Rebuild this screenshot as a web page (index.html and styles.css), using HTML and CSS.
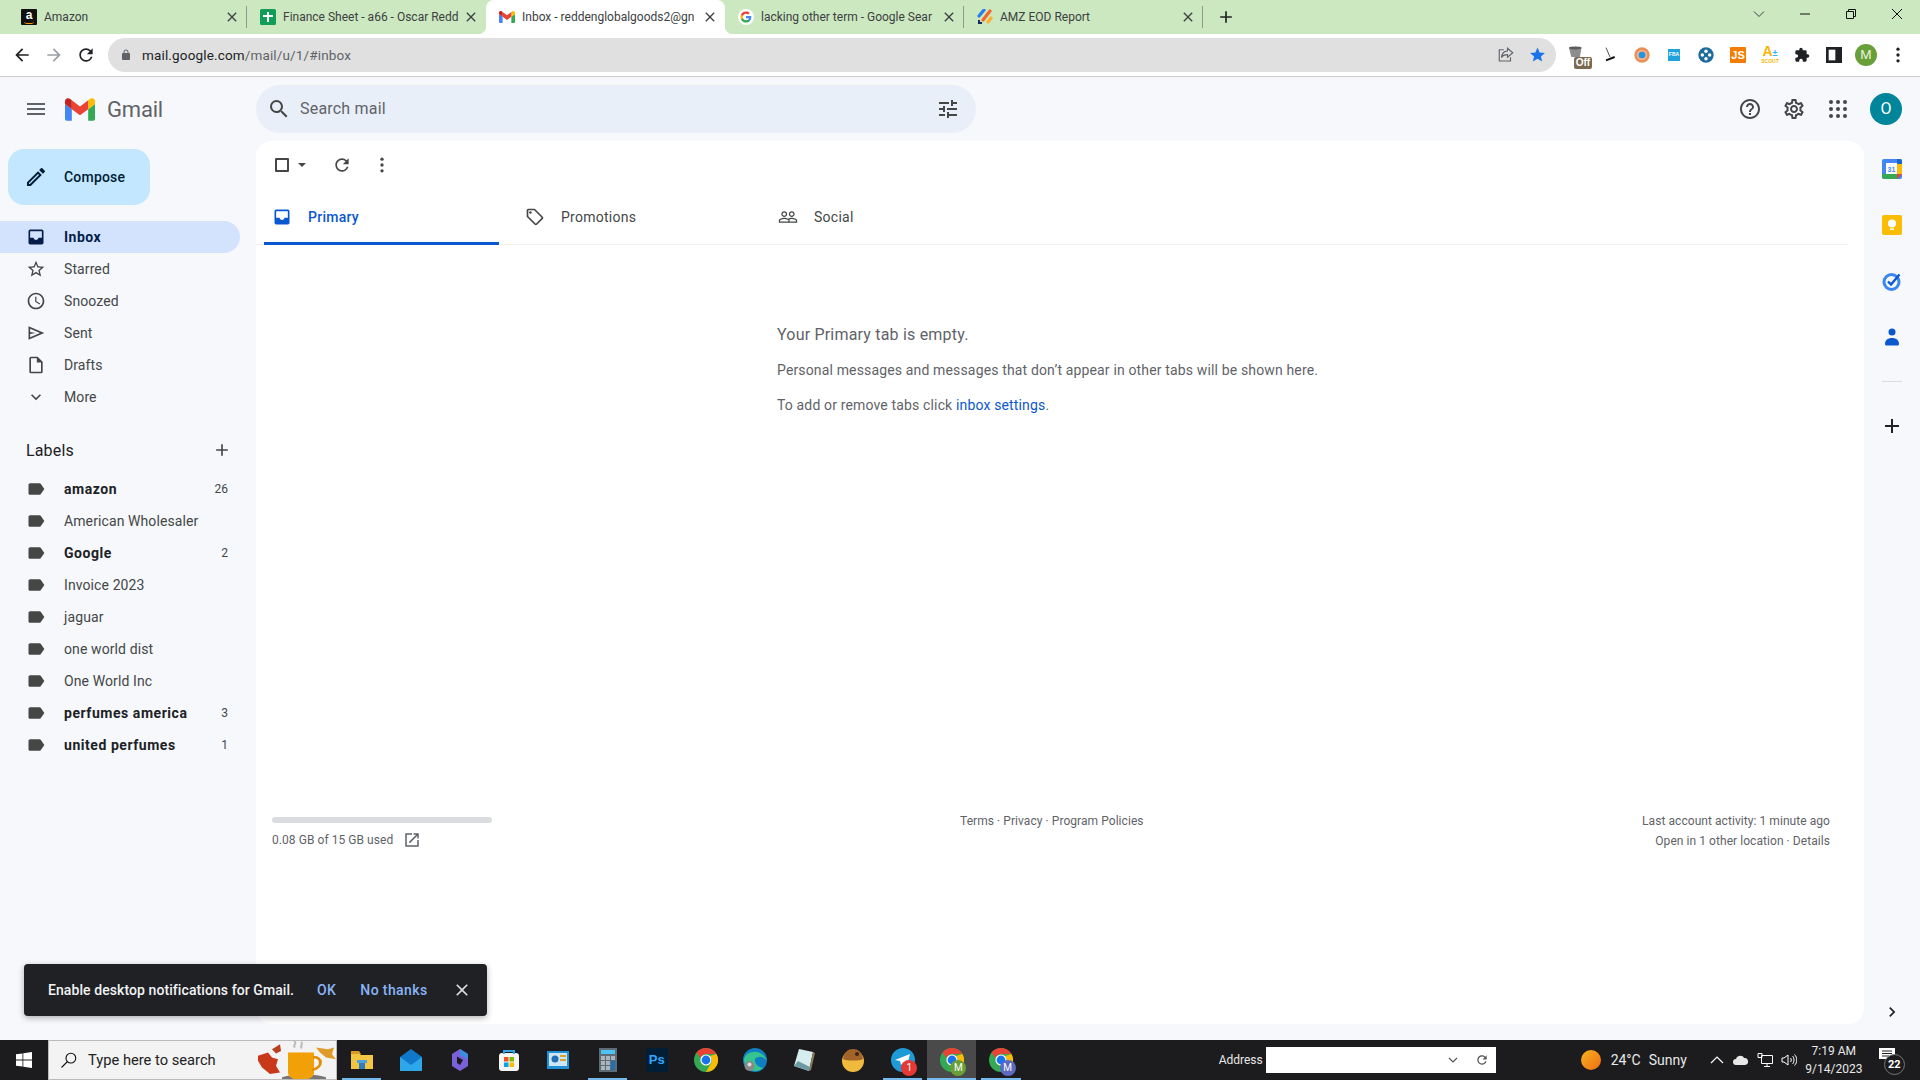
FILE: index.html
```html
<!DOCTYPE html>
<html lang="en">
<head>
    <meta charset="UTF-8">
    <meta name="viewport" content="width=device-width, initial-scale=1.0">
    <title>Inbox - Gmail</title>
    <link rel="stylesheet" href="styles.css">
</head>
<body>

<svg class="sprite" xmlns="http://www.w3.org/2000/svg">
    <symbol id="i-menu" viewBox="0 0 24 24"><path d="M3 18h18v-2H3v2zm0-5h18v-2H3v2zm0-7v2h18V6H3z"/></symbol>
    <symbol id="i-search" viewBox="0 0 24 24"><path d="M15.5 14h-.79l-.28-.27A6.471 6.471 0 0 0 16 9.5 6.5 6.5 0 1 0 9.5 16c1.61 0 3.09-.59 4.23-1.57l.27.28v.79l5 4.99L20.49 19l-4.99-5zm-6 0C7.01 14 5 11.99 5 9.5S7.01 5 9.5 5 14 7.01 14 9.5 11.99 14 9.5 14z"/></symbol>
    <symbol id="i-tune" viewBox="0 0 24 24"><path d="M3 17v2h6v-2H3zM3 5v2h10V5H3zm10 16v-2h8v-2h-8v-2h-2v6h2zM7 9v2H3v2h4v2h2V9H7zm14 4v-2H11v2h10zm-6-4h2V7h4V5h-4V3h-2v6z"/></symbol>
    <symbol id="i-help" viewBox="0 0 24 24"><path d="M11 18h2v-2h-2v2zm1-16C6.48 2 2 6.48 2 12s4.48 10 10 10 10-4.48 10-10S17.52 2 12 2zm0 18c-4.41 0-8-3.59-8-8s3.59-8 8-8 8 3.59 8 8-3.59 8-8 8zm0-14c-2.21 0-4 1.79-4 4h2c0-1.1.9-2 2-2s2 .9 2 2c0 2-3 1.75-3 5h2c0-2.25 3-2.5 3-5 0-2.21-1.79-4-4-4z"/></symbol>
    <symbol id="i-gear" viewBox="0 0 24 24"><path d="M19.43 12.98c.04-.32.07-.64.07-.98 0-.34-.03-.66-.07-.98l2.11-1.65c.19-.15.24-.42.12-.64l-2-3.46c-.09-.16-.26-.25-.44-.25-.06 0-.12.01-.17.03l-2.49 1c-.52-.4-1.08-.73-1.69-.98l-.38-2.65C14.46 2.18 14.25 2 14 2h-4c-.25 0-.46.18-.49.42l-.38 2.65c-.61.25-1.17.59-1.69.98l-2.49-1c-.06-.02-.12-.03-.18-.03-.17 0-.34.09-.43.25l-2 3.46c-.13.22-.07.49.12.64l2.11 1.65c-.04.32-.07.65-.07.98 0 .33.03.66.07.98l-2.11 1.65c-.19.15-.24.42-.12.64l2 3.46c.09.16.26.25.44.25.06 0 .12-.01.17-.03l2.49-1c.52.4 1.08.73 1.69.98l.38 2.65c.03.24.24.42.49.42h4c.25 0 .46-.18.49-.42l.38-2.65c.61-.25 1.17-.59 1.69-.98l2.49 1c.06.02.12.03.18.03.17 0 .34-.09.43-.25l2-3.46c.12-.22.07-.49-.12-.64l-2.11-1.65zm-1.98-1.71c.04.31.05.52.05.73 0 .21-.02.43-.05.73l-.14 1.13.89.7 1.08.84-.7 1.21-1.27-.51-1.04-.42-.9.68c-.43.32-.84.56-1.25.73l-1.06.43-.16 1.13-.2 1.35h-1.4l-.19-1.35-.16-1.13-1.06-.43c-.43-.18-.83-.41-1.23-.71l-.91-.7-1.06.43-1.27.51-.7-1.21 1.08-.84.89-.7-.14-1.13c-.03-.31-.05-.54-.05-.74s.02-.43.05-.73l.14-1.13-.89-.7-1.08-.84.7-1.21 1.27.51 1.04.42.9-.68c.43-.32.84-.56 1.25-.73l1.06-.43.16-1.13.2-1.35h1.39l.19 1.35.16 1.13 1.06.43c.43.18.83.41 1.23.71l.91.7 1.06-.43 1.27-.51.7 1.21-1.07.85-.89.7.14 1.13zM12 8c-2.21 0-4 1.79-4 4s1.79 4 4 4 4-1.79 4-4-1.79-4-4-4zm0 6c-1.1 0-2-.9-2-2s.9-2 2-2 2 .9 2 2-.9 2-2 2z"/></symbol>
    <symbol id="i-apps" viewBox="0 0 24 24"><circle cx="5" cy="5" r="2"/><circle cx="12" cy="5" r="2"/><circle cx="19" cy="5" r="2"/><circle cx="5" cy="12" r="2"/><circle cx="12" cy="12" r="2"/><circle cx="19" cy="12" r="2"/><circle cx="5" cy="19" r="2"/><circle cx="12" cy="19" r="2"/><circle cx="19" cy="19" r="2"/></symbol>
    <symbol id="i-pencil" viewBox="0 0 24 24"><path d="M3 17.25V21h3.75L17.81 9.94l-3.75-3.75L3 17.25zM5.92 19H5v-.92l9.06-9.06.92.92L5.92 19zM20.71 5.63l-2.34-2.34a1 1 0 0 0-1.41 0l-1.83 1.83 3.75 3.75 1.83-1.83a1 1 0 0 0 0-1.41z"/></symbol>
    <symbol id="i-inbox" viewBox="0 0 24 24"><path d="M19 3H5a2 2 0 0 0-2 2v14a2 2 0 0 0 2 2h14a2 2 0 0 0 2-2V5a2 2 0 0 0-2-2zm0 10h-4.2c0 1.5-1.25 2.7-2.8 2.7S9.2 14.5 9.2 13H5V5h14v8z"/></symbol>
    <symbol id="i-star" viewBox="0 0 24 24"><path d="M22 9.24l-7.19-.62L12 2 9.19 8.63 2 9.24l5.46 4.73L5.82 21 12 17.27 18.18 21l-1.63-7.03L22 9.24zM12 15.4l-3.76 2.27 1-4.28-3.32-2.88 4.38-.38L12 6.1l1.71 4.04 4.38.38-3.32 2.88 1 4.28L12 15.4z"/></symbol>
    <symbol id="i-clock" viewBox="0 0 24 24"><path d="M11.99 2C6.47 2 2 6.48 2 12s4.47 10 9.99 10C17.52 22 22 17.52 22 12S17.52 2 11.99 2zM12 20c-4.42 0-8-3.58-8-8s3.58-8 8-8 8 3.58 8 8-3.58 8-8 8zm.5-13H11v6l5.25 3.15.75-1.23-4.5-2.67z"/></symbol>
    <symbol id="i-send" viewBox="0 0 24 24"><path d="M3 4v16l19-8L3 4zm2 3l11.8 5L5 17v-3.8l6.5-1.2L5 10.8V7z"/></symbol>
    <symbol id="i-draft" viewBox="0 0 24 24"><path d="M14 2H6a2 2 0 0 0-2 2v16a2 2 0 0 0 2 2h12a2 2 0 0 0 2-2V8l-6-6zm4 18H6V4h7v5h5v11z"/></symbol>
    <symbol id="i-chevron" viewBox="0 0 24 24"><path d="M16.59 8.59L12 13.17 7.41 8.59 6 10l6 6 6-6z"/></symbol>
    <symbol id="i-label" viewBox="0 0 24 24"><path d="M17.63 5.84C17.27 5.33 16.67 5 16 5L5 5.01C3.9 5.01 3 5.9 3 7v10c0 1.1.9 1.99 2 1.99L16 19c.67 0 1.27-.33 1.63-.84L22 12l-4.37-6.16z"/></symbol>
    <symbol id="i-add" viewBox="0 0 24 24"><path d="M19 13h-6v6h-2v-6H5v-2h6V5h2v6h6v2z"/></symbol>
    <symbol id="i-refresh" viewBox="0 0 24 24"><path d="M17.65 6.35A7.958 7.958 0 0 0 12 4c-4.42 0-7.99 3.58-7.99 8s3.57 8 7.99 8c3.73 0 6.84-2.55 7.73-6h-2.08A5.99 5.99 0 0 1 12 18c-3.31 0-6-2.69-6-6s2.69-6 6-6c1.66 0 3.14.69 4.22 1.78L13 11h7V4l-2.35 2.35z"/></symbol>
    <symbol id="i-dots" viewBox="0 0 24 24"><circle cx="12" cy="5" r="2"/><circle cx="12" cy="12" r="2"/><circle cx="12" cy="19" r="2"/></symbol>
    <symbol id="i-tag" viewBox="0 0 24 24"><path d="M21.41 11.58l-9-9C12.05 2.22 11.55 2 11 2H4c-1.1 0-2 .9-2 2v7c0 .55.22 1.05.59 1.42l9 9c.36.36.86.58 1.41.58s1.05-.22 1.41-.59l7-7c.37-.36.59-.86.59-1.41s-.23-1.06-.59-1.42zM13 20.01L4 11V4h7v-.01l9 9-7 7.02z"/><circle cx="6.5" cy="6.5" r="1.5"/></symbol>
    <symbol id="i-people" viewBox="0 0 24 24"><path d="M16.5 13c-1.2 0-3.07.34-4.5 1-1.43-.67-3.3-1-4.5-1C5.33 13 1 14.08 1 16.25V19h22v-2.75c0-2.17-4.33-3.25-6.5-3.25zm-4 4.5h-10v-1.25c0-.54 2.56-1.75 5-1.75s5 1.21 5 1.75v1.25zm9 0H14v-1.25c0-.46-.2-.86-.52-1.22.88-.3 1.96-.53 3.02-.53 2.44 0 5 1.21 5 1.75v1.25zM7.5 12c1.93 0 3.5-1.57 3.5-3.5S9.43 5 7.5 5 4 6.57 4 8.5 5.57 12 7.5 12zm0-5.5c1.1 0 2 .9 2 2s-.9 2-2 2-2-.9-2-2 .9-2 2-2zm9 5.5c1.93 0 3.5-1.57 3.5-3.5S18.43 5 16.5 5 13 6.57 13 8.5s1.57 3.5 3.5 3.5zm0-5.5c1.1 0 2 .9 2 2s-.9 2-2 2-2-.9-2-2 .9-2 2-2z"/></symbol>
    <symbol id="i-open" viewBox="0 0 24 24"><path d="M19 19H5V5h7V3H3v18h18v-9h-2v7zM14 3v2h3.59l-9.83 9.83 1.41 1.41L19 6.41V10h2V3h-7z"/></symbol>
    <symbol id="i-close" viewBox="0 0 24 24"><path d="M19 6.41L17.59 5 12 10.59 6.41 5 5 6.41 10.59 12 5 17.59 6.41 19 12 13.41 17.59 19 19 17.59 13.41 12z"/></symbol>
    <symbol id="i-gmail" viewBox="52 42 88 66">
        <path fill="#4285f4" d="M58 108h14V74L52 59v43c0 3.32 2.69 6 6 6"/>
        <path fill="#34a853" d="M120 108h14c3.32 0 6-2.69 6-6V59l-20 15"/>
        <path fill="#fbbc04" d="M120 48v26l20-15v-8c0-7.42-8.47-11.65-14.4-7.2"/>
        <path fill="#ea4335" d="M72 74V48l24 18 24-18v26L96 92"/>
        <path fill="#c5221f" d="M52 51v8l20 15V48l-5.6-4.2c-5.94-4.45-14.4-.22-14.4 7.2"/>
    </symbol>
    <symbol id="i-chrome" viewBox="0 0 24 24">
        <circle cx="12" cy="12" r="12" fill="#34a853"/>
        <path fill="#ea4335" d="M12 0a12 12 0 0 1 10.4 6H12a6 6 0 0 0-5.6 3.8L2.5 4.600A12 12 0 0 1 12 0z"/>
        <path fill="#fbbc04" d="M22.4 6A12 12 0 0 1 12 24l5.200-9A6 6 0 0 0 16 8z"/>
        <circle cx="12" cy="12" r="5.6" fill="#fff"/>
        <circle cx="12" cy="12" r="4.4" fill="#1a73e8"/>
    </symbol>
</svg>

<div class="tabstrip">
    <div class="tab tab-sep">
        <span class="favicon fav-amazon">a</span>
        <span class="tab-title">Amazon</span>
        <svg class="tab-close"><use href="#i-close"/></svg>
    </div>
    <div class="tab">
        <svg class="favicon" viewBox="0 0 16 16"><rect width="16" height="16" rx="1.5" fill="#0f9d58"/><path d="M7 3h2v3h4v2H9v5H7V8H3V6h4z" fill="#fff"/></svg>
        <span class="tab-title">Finance Sheet - a66 - Oscar Redd</span>
        <svg class="tab-close"><use href="#i-close"/></svg>
    </div>
    <div class="tab tab-active">
        <svg class="favicon"><use href="#i-gmail"/></svg>
        <span class="tab-title">Inbox - reddenglobalgoods2@gn</span>
        <svg class="tab-close"><use href="#i-close"/></svg>
    </div>
    <div class="tab tab-sep">
        <svg class="favicon" viewBox="0 0 16 16">
            <circle cx="8" cy="8" r="8" fill="#fff"/>
            <path fill="#4285f4" d="M13.3 8.1c0-.4 0-.8-.1-1.100H8v2.200h3c-.1.7-.5 1.300-1.100 1.700v1.400h1.800c1-1 1.600-2.400 1.600-4.200z"/>
            <path fill="#34a853" d="M8 13.5c1.500 0 2.700-.5 3.700-1.300l-1.800-1.400c-.5.300-1.100.5-1.900.5-1.400 0-2.700-1-3.100-2.300H3v1.400c.9 1.900 2.800 3.100 5 3.100z"/>
            <path fill="#fbbc04" d="M4.900 9c-.2-.7-.2-1.300 0-2V5.600H3a5.500 5.500 0 0 0 0 4.800z"/>
            <path fill="#ea4335" d="M8 4.700c.8 0 1.500.3 2.100.8l1.600-1.600C10.700 3 9.500 2.500 8 2.500c-2.200 0-4.100 1.200-5 3.100L4.900 7C5.300 5.700 6.600 4.700 8 4.700z"/>
        </svg>
        <span class="tab-title">lacking other term - Google Sear</span>
        <svg class="tab-close"><use href="#i-close"/></svg>
    </div>
    <div class="tab tab-sep">
        <svg class="favicon" viewBox="0 0 16 16">
            <path d="M2 7l5-6" stroke="#2b7de9" stroke-width="3.2" stroke-linecap="round"/>
            <path d="M6 11l7-9" stroke="#f4662a" stroke-width="3.2" stroke-linecap="round"/>
            <path d="M11 13l3-4" stroke="#fbb234" stroke-width="3.2" stroke-linecap="round"/>
            <path d="M1 11h2v2h2v2H1z" fill="#1b2a5b"/>
        </svg>
        <span class="tab-title">AMZ EOD Report</span>
        <svg class="tab-close"><use href="#i-close"/></svg>
    </div>
    <svg class="new-tab"><use href="#i-add"/></svg>
    <div class="window-controls">
        <svg class="win-btn" viewBox="0 0 12 12"><path d="M1 3.5l5 5 5-5" fill="none" stroke="#3c4043" stroke-width="1"/></svg>
        <svg class="win-btn" viewBox="0 0 12 12"><path d="M1 6h10" stroke="#111" stroke-width="1"/></svg>
        <svg class="win-btn" viewBox="0 0 12 12"><path d="M1.5 3.5h7v7h-7zM3.5 3.5v-2h7v7h-2" fill="none" stroke="#111" stroke-width="1"/></svg>
        <svg class="win-btn" viewBox="0 0 12 12"><path d="M1 1l10 10M11 1L1 11" stroke="#111" stroke-width="1"/></svg>
    </div>
</div>

<div class="toolbar">
    <svg class="nav-btn" viewBox="0 0 24 24"><path d="M20 11H7.83l5.59-5.59L12 4l-8 8 8 8 1.41-1.41L7.83 13H20v-2z"/></svg>
    <svg class="nav-btn nav-off" viewBox="0 0 24 24"><path d="M12 4l-1.41 1.41L16.17 11H4v2h12.17l-5.58 5.59L12 20l8-8z"/></svg>
    <svg class="nav-btn"><use href="#i-refresh"/></svg>
    <div class="omnibox">
        <svg class="lock" viewBox="0 0 24 24"><path d="M18 8h-1V6c0-2.76-2.24-5-5-5S7 3.24 7 6v2H6c-1.1 0-2 .9-2 2v10c0 1.1.9 2 2 2h12c1.1 0 2-.9 2-2V10c0-1.1-.9-2-2-2zM9 6c0-1.66 1.34-3 3-3s3 1.34 3 3v2H9V6z"/></svg>
        <span class="url"><span class="url-host">mail.google.com</span>/mail/u/1/#inbox</span>
        <svg class="omni-share" viewBox="0 0 24 24" fill="none" stroke="#5f6368" stroke-width="1.5"><path d="M9 5H3v15h15v-5"/><path d="M14 3l7 6-7 6v-3.5c-4 0-6.500 1-8 4 .5-5 3-8.500 8-9z"/></svg>
        <svg class="omni-star" viewBox="0 0 24 24"><path d="M12 2l3 7.200 7.500.6-5.700 4.900 1.800 7.300-6.600-4-6.600 4 1.800-7.300-5.700-4.900 7.500-.6z"/></svg>
    </div>
    <div class="extensions">
        <div class="ext ext-off">
            <svg viewBox="0 0 20 14"><path d="M1 2h16l-2 12H4z" fill="#8d8d8d"/><ellipse cx="9" cy="2.5" rx="8" ry="2" fill="#5c5c5c"/></svg>
            <span class="off-badge">Off</span>
        </div>
        <div class="ext"><svg viewBox="0 0 24 24"><path d="M6 1l6 14" stroke="#444" stroke-width="1.4"/><path d="M6 20l13-5" stroke="#111" stroke-width="3"/></svg></div>
        <div class="ext"><svg viewBox="0 0 24 24"><circle cx="12" cy="12" r="11.500" fill="#e88f5a"/><circle cx="12" cy="12" r="8" fill="#f4b183"/><circle cx="12" cy="12" r="5" fill="#1e96e8"/></svg></div>
        <div class="ext"><span class="ext-fba">FBA</span></div>
        <div class="ext"><svg viewBox="0 0 24 24"><circle cx="12" cy="12" r="11.500" fill="#1e6a9e"/><circle cx="12" cy="6.500" r="2.600" fill="#fff"/><circle cx="12" cy="17.500" r="2.600" fill="#fff"/><circle cx="6.500" cy="12" r="2.600" fill="#fff"/><circle cx="17.500" cy="12" r="2.600" fill="#fff"/></svg></div>
        <div class="ext"><span class="ext-js">JS</span></div>
        <div class="ext ext-ascout"><span class="ascout-a">A<small>±</small></span><span class="ascout-s">SCOUT</span></div>
        <div class="ext"><svg viewBox="0 0 24 24" fill="#202124"><path d="M20.5 11H19V7a2 2 0 0 0-2-2h-4V3.500a2.500 2.500 0 0 0-5 0V5H4a2 2 0 0 0-2 2v3.800h1.500a2.700 2.700 0 0 1 0 5.400H2V20a2 2 0 0 0 2 2h3.800v-1.500a2.700 2.700 0 0 1 5.400 0V22H17a2 2 0 0 0 2-2v-4h1.500a2.500 2.500 0 0 0 0-5z"/></svg></div>
        <div class="ext"><svg viewBox="0 0 24 24"><path d="M0 0h24v24H0z" fill="#202124"/><path d="M4 4h10v16H4z" fill="#fff"/></svg></div>
        <div class="ext"><span class="profile-m">M</span></div>
        <div class="ext"><svg class="chrome-menu" viewBox="0 0 24 24"><use href="#i-dots"/></svg></div>
    </div>
</div>

<div class="gmail">
    <header class="gm-header">
        <div class="brand">
            <svg class="gm-icon burger"><use href="#i-menu"/></svg>
            <svg class="gmail-logo"><use href="#i-gmail"/></svg>
            <span class="gmail-word">Gmail</span>
        </div>
        <div class="searchbox">
            <svg class="gm-icon search-icon"><use href="#i-search"/></svg>
            <span class="search-text">Search mail</span>
            <svg class="gm-icon tune-icon"><use href="#i-tune"/></svg>
        </div>
        <div class="header-right">
            <svg class="gm-icon"><use href="#i-help"/></svg>
            <svg class="gm-icon"><use href="#i-gear"/></svg>
            <svg class="gm-icon"><use href="#i-apps"/></svg>
            <span class="account">O</span>
        </div>
    </header>

    <div class="gm-body">
        <nav class="sidebar">
            <div class="compose">
                <svg class="compose-pencil"><use href="#i-pencil"/></svg>
                <span>Compose</span>
            </div>
            <ul class="nav-list">
                <li class="nav-item active"><svg><use href="#i-inbox"/></svg><span>Inbox</span></li>
                <li class="nav-item"><svg><use href="#i-star"/></svg><span>Starred</span></li>
                <li class="nav-item"><svg><use href="#i-clock"/></svg><span>Snoozed</span></li>
                <li class="nav-item"><svg><use href="#i-send"/></svg><span>Sent</span></li>
                <li class="nav-item"><svg><use href="#i-draft"/></svg><span>Drafts</span></li>
                <li class="nav-item"><svg><use href="#i-chevron"/></svg><span>More</span></li>
            </ul>
            <div class="labels-head">
                <span>Labels</span>
                <svg><use href="#i-add"/></svg>
            </div>
            <ul class="nav-list label-list">
                <li class="nav-item unread"><svg><use href="#i-label"/></svg><span>amazon</span><em>26</em></li>
                <li class="nav-item"><svg><use href="#i-label"/></svg><span>American Wholesaler</span></li>
                <li class="nav-item unread"><svg><use href="#i-label"/></svg><span>Google</span><em>2</em></li>
                <li class="nav-item"><svg><use href="#i-label"/></svg><span>Invoice 2023</span></li>
                <li class="nav-item"><svg><use href="#i-label"/></svg><span>jaguar</span></li>
                <li class="nav-item"><svg><use href="#i-label"/></svg><span>one world dist</span></li>
                <li class="nav-item"><svg><use href="#i-label"/></svg><span>One World Inc</span></li>
                <li class="nav-item unread"><svg><use href="#i-label"/></svg><span>perfumes america</span><em>3</em></li>
                <li class="nav-item unread"><svg><use href="#i-label"/></svg><span>united perfumes</span><em>1</em></li>
            </ul>
        </nav>

        <main class="panel">
            <div class="actions">
                <span class="check-box"></span>
                <span class="check-caret"></span>
                <svg class="act-icon act-refresh"><use href="#i-refresh"/></svg>
                <svg class="act-icon act-more"><use href="#i-dots"/></svg>
            </div>
            <div class="cat-tabs">
                <div class="cat-tab selected"><svg><use href="#i-inbox"/></svg><span>Primary</span></div>
                <div class="cat-tab"><svg><use href="#i-tag"/></svg><span>Promotions</span></div>
                <div class="cat-tab"><svg><use href="#i-people"/></svg><span>Social</span></div>
            </div>
            <div class="empty">
                <h2>Your Primary tab is empty.</h2>
                <p>Personal messages and messages that don’t appear in other tabs will be shown here.</p>
                <p>To add or remove tabs click <a href="#">inbox settings</a>.</p>
            </div>
            <footer class="gm-footer">
                <div class="storage">
                    <div class="storage-bar"></div>
                    <div class="storage-text">0.08 GB of 15 GB used <svg><use href="#i-open"/></svg></div>
                </div>
                <div class="policies">Terms · Privacy · Program Policies</div>
                <div class="activity">
                    <div>Last account activity: 1 minute ago</div>
                    <div>Open in 1 other location · Details</div>
                </div>
            </footer>
        </main>

        <aside class="sidepanel">
            <svg class="side-icon" viewBox="0 0 20 20">
                <rect width="20" height="20" rx="2" fill="#4285f4"/>
                <path d="M15 0h3a2 2 0 0 1 2 2v3h-5z" fill="#1967d2"/>
                <rect x="15" y="5" width="5" height="10" fill="#fbbc04"/>
                <path d="M0 15h15v5H2a2 2 0 0 1-2-2z" fill="#34a853"/>
                <path d="M15 15h5l-5 5z" fill="#ea4335"/>
                <rect x="4" y="4" width="11" height="11" fill="#fff"/>
                <text x="9.5" y="13" class="cal-num">31</text>
            </svg>
            <svg class="side-icon" viewBox="0 0 20 20">
                <rect width="20" height="20" rx="2" fill="#fbbc04"/>
                <circle cx="10" cy="8.500" r="4" fill="#fff"/>
                <rect x="8" y="13.500" width="4" height="1.500" fill="#fff"/>
            </svg>
            <svg class="side-icon" viewBox="0 0 20 20">
                <circle cx="9.500" cy="11" r="7.500" fill="none" stroke="#3b86f0" stroke-width="3"/>
                <path d="M6 10.500l3 3 8.500-10" fill="none" stroke="#0b57d0" stroke-width="2.400"/>
            </svg>
            <svg class="side-icon" viewBox="0 0 20 20">
                <circle cx="10" cy="5" r="3.500" fill="#0b57d0"/>
                <path d="M3 17c0-4 3-6 7-6s7 2 7 6c0 1-1 1.500-2 1.500H5c-1 0-2-.5-2-1.500z" fill="#0b57d0"/>
            </svg>
            <div class="side-divider"></div>
            <svg class="side-add"><use href="#i-add"/></svg>
            <svg class="side-expand" viewBox="0 0 24 24"><path d="M8.59 16.59L13.17 12 8.59 7.41 10 6l6 6-6 6z"/></svg>
        </aside>
    </div>

    <div class="notify">
        <span class="notify-text">Enable desktop notifications for Gmail.</span>
        <a href="#">OK</a>
        <a href="#">No thanks</a>
        <svg><use href="#i-close"/></svg>
    </div>
</div>

<div class="taskbar">
    <div class="start">
        <svg viewBox="0 0 16 16" fill="#fff"><path d="M0 2.300l6.500-.9v6.200H0zM7.300 1.300L16 0v7.600H7.300zM0 8.400h6.500v6.200L0 13.700zM7.300 8.400H16V16l-8.700-1.200z"/></svg>
    </div>
    <div class="task-search">
        <svg viewBox="0 0 24 24" fill="none" stroke="#111" stroke-width="1.500"><circle cx="14.500" cy="9.500" r="6.500"/><path d="M10 14l-8 8"/></svg>
        <span>Type here to search</span>
        <svg class="mug" viewBox="0 0 80 46" preserveAspectRatio="none">
            <path d="M2 18l10-4 4 6 6 2-2 8 4 8-10 2-8-8-4-8z" fill="#c8381b"/>
            <path d="M16 10l8-6 1 8-5 3z" fill="#b9401c"/>
            <path d="M60 8l12 2 6-2-2 8 4 6-10-2-6-6z" fill="#e09a2b"/>
            <path d="M38 0c4 3-2 5 1 8M45 1c3 3-2 5 1 8" fill="none" stroke="#bbb" stroke-width="2"/>
            <path d="M26 44c8-4 36-4 44 0v2H26z" fill="#777"/>
            <path d="M32 14h26v24c0 5-4 8-8 8H40c-4 0-8-3-8-8z" fill="#f2a007"/>
            <path d="M57 20c9-2 11 12-1 15" fill="none" stroke="#e08e05" stroke-width="3"/>
        </svg>
    </div>
    <div class="task-icons">
        <div class="task-item running">
            <svg viewBox="0 0 24 24"><path d="M1 5h8l2 2h12v14H1z" fill="#f4c542"/><path d="M1 3h8l2 3H1z" fill="#d99a24"/><path d="M9 14h6v7H9z" fill="#2f7bbf"/><path d="M7 12h10v3H7z" fill="#4aa3df"/></svg>
        </div>
        <div class="task-item">
            <svg viewBox="0 0 24 24"><path d="M1 9l11-8 11 8v14H1z" fill="#0f78c9"/><path d="M1 9l11 8 11-8v14H1z" fill="#2ea6ea"/></svg>
        </div>
        <div class="task-item">
            <svg viewBox="0 0 24 24"><path d="M12 1l8 5v12l-8 5-8-5V6z" fill="#7b61d9"/><path d="M12 1l8 5v5l-8-4z" fill="#3b8fe0"/><path d="M9 8.500l6 3.500-3 5-3-2z" fill="#1c1c1e"/></svg>
        </div>
        <div class="task-item">
            <svg viewBox="0 0 24 24"><rect x="2" y="5" width="20" height="18" rx="3" fill="#f5f5f5"/><path d="M7 6V3h10v3" fill="none" stroke="#2ea6ea" stroke-width="2"/><rect x="7" y="9" width="4.500" height="4.500" fill="#f25022"/><rect x="12.500" y="9" width="4.500" height="4.500" fill="#7fba00"/><rect x="7" y="14.500" width="4.500" height="4.500" fill="#00a4ef"/><rect x="12.500" y="14.500" width="4.500" height="4.500" fill="#ffb900"/></svg>
        </div>
        <div class="task-item">
            <svg viewBox="0 0 24 24"><rect x="1" y="3" width="22" height="18" fill="#1f8fd6"/><rect x="3" y="5" width="18" height="13" fill="#cde6f7"/><circle cx="9" cy="11" r="3.500" fill="#1f6fb5"/><path d="M14 7h6v2h-6zM14 11h6v2h-6z" fill="#e0a020"/></svg>
        </div>
        <div class="task-item running">
            <svg viewBox="0 0 24 24"><rect x="3" y="0" width="18" height="24" fill="#5d6b75"/><rect x="5" y="2" width="14" height="4" fill="#4fc3f7"/><path d="M5 8h4v4H5zM10 8h4v4h-4zM15 8h4v4h-4zM5 13h4v4H5zM10 13h4v4h-4zM5 18h4v4H5zM10 18h4v4h-4z" fill="#aab4bb"/><rect x="15" y="13" width="4" height="9" fill="#1f6fb5"/></svg>
        </div>
        <div class="task-item"><span class="ps-icon">Ps</span></div>
        <div class="task-item"><svg><use href="#i-chrome"/></svg></div>
        <div class="task-item">
            <svg viewBox="0 0 24 24"><circle cx="12" cy="12" r="12" fill="#0f7fc4"/><path d="M1 11C3 2 20 0 24 13c-2-4-9-6-12-2-1 3 2 8 8 9-7 7-20 1-19-9z" fill="#35c48d"/><circle cx="6.500" cy="18" r="5" fill="#888"/><circle cx="6.500" cy="16.500" r="2" fill="#ddd"/></svg>
        </div>
        <div class="task-item">
            <svg viewBox="0 0 24 24"><path d="M7 1l14 3-4 19-15-5z" fill="#d6edf0"/><path d="M2 18l15 5 1-4-12-6z" fill="#6e9aa3"/><path d="M21 4l-4 19 2-1 4-17z" fill="#8b7a55"/></svg>
        </div>
        <div class="task-item">
            <svg viewBox="0 0 24 24"><ellipse cx="12" cy="13" rx="11" ry="11" fill="#f0bb3c"/><path d="M2 11C3 4 7 1 12 1s9 3 10 10c-3 2-17 2-20 0z" fill="#a2642a"/><circle cx="16" cy="6" r="2" fill="#3b2412"/></svg>
        </div>
        <div class="task-item running">
            <svg viewBox="0 0 24 24"><circle cx="12" cy="12" r="12" fill="#1e9bd7"/><path d="M4 12l15-6-3 12-4-3-2 2-1-4z" fill="#fff"/></svg>
            <span class="task-badge">1</span>
        </div>
        <div class="task-item running current">
            <svg><use href="#i-chrome"/></svg>
            <span class="profile-badge">M</span>
        </div>
        <div class="task-item running">
            <svg><use href="#i-chrome"/></svg>
            <span class="profile-badge badge-blue">M</span>
        </div>
    </div>
    <span class="address-label">Address</span>
    <div class="address-box">
        <svg class="addr-caret" viewBox="0 0 12 12"><path d="M2 4l4 4 4-4" fill="none" stroke="#555" stroke-width="1.200"/></svg>
        <svg class="addr-go" viewBox="0 0 24 24"><use href="#i-refresh"/></svg>
    </div>
    <span class="sun"></span>
    <span class="weather">24°C</span>
    <span class="weather weather-word">Sunny</span>
    <svg class="tray tray-first" viewBox="0 0 16 16"><path d="M2 11l6-6 6 6" fill="none" stroke="#fff" stroke-width="1.200"/></svg>
    <svg class="tray" viewBox="0 0 16 16"><path d="M3 13a3 3 0 0 1 0-6c1-4 7-4 8-1a3.500 3.500 0 0 1 1 7z" fill="#e8e8e8"/></svg>
    <svg class="tray" viewBox="0 0 16 16" fill="none" stroke="#fff"><path d="M4.500 3.500h11v8h-11zM1 1.500h4v4H1zM10 11.500v3M7 14.500h6"/></svg>
    <svg class="tray" viewBox="0 0 16 16" fill="none" stroke="#fff"><path d="M1 6h2l4-3v10l-4-3H1zM9.500 6c1 1 1 3 0 4M11.500 4c2 2 2 6 0 8M13.500 2.500c3 3 3 8 0 11"/></svg>
    <div class="clock">
        <div>7:19 AM</div>
        <div>9/14/2023</div>
    </div>
    <div class="action-center">
        <svg viewBox="0 0 16 14"><path d="M0 0h16v11H0z" fill="#fff"/><path d="M3 3h10M3 5.500h10M3 8h7" stroke="#222"/></svg>
        <span class="ac-count">22</span>
    </div>
</div>

</body>
</html>
```

FILE: styles.css
```css
* {
    box-sizing: border-box;
}
html, body {
    margin: 0;
    padding: 0;
}
body {
    width: 1920px;
    height: 1080px;
    overflow: hidden;
    display: flex;
    flex-direction: column;
    font-family: Roboto, Arial, sans-serif;
    background: #f6f8fc;
    color: #444746;
}
ul {
    list-style: none;
    margin: 0;
    padding: 0;
}
a {
    text-decoration: none;
}
.sprite {
    display: none;
}

/* browser tabs */
.tabstrip {
    height: 34px;
    background: #cce8c0;
    display: flex;
    padding-left: 8px;
    flex-shrink: 0;
}
.tab {
    width: 239px;
    display: flex;
    align-items: center;
    padding: 0 7px 0 13px;
    font-size: 12px;
    color: #3c4043;
    position: relative;
}
.tab-sep::after {
    content: "";
    position: absolute;
    right: 0;
    top: 6px;
    height: 22px;
    width: 1px;
    background: #8c9c86;
}
.tab-active {
    background: #fff;
    border-radius: 8px 8px 0 0;
}
.tab-active::before,
.tab-active::after {
    content: "";
    position: absolute;
    bottom: 0;
    width: 8px;
    height: 8px;
}
.tab-active::before {
    left: -8px;
    background: radial-gradient(circle at 0 0, #cce8c0 8px, #fff 8.5px);
}
.tab-active::after {
    right: -8px;
    background: radial-gradient(circle at 100% 0, #cce8c0 8px, #fff 8.5px);
}
.favicon {
    width: 16px;
    height: 16px;
    flex-shrink: 0;
    margin-right: 7px;
}
.fav-amazon {
    background: #111;
    color: #fff;
    font: bold 12px/12px "Liberation Sans", sans-serif;
    text-align: center;
    border-radius: 1px;
    position: relative;
}
.fav-amazon::after {
    content: "";
    position: absolute;
    left: 3px;
    right: 3px;
    bottom: 1px;
    height: 3px;
    border-bottom: 1.5px solid #f90;
    border-radius: 0 0 50% 50%;
}
.tab-title {
    flex: 1;
    white-space: nowrap;
    overflow: hidden;
}
.tab-close {
    width: 16px;
    height: 16px;
    margin-left: 1px;
    fill: #3c4043;
    flex-shrink: 0;
}
.new-tab {
    width: 20px;
    height: 20px;
    margin: 7px 0 0 13px;
    fill: #202124;
}
.window-controls {
    margin-left: auto;
    display: flex;
    align-items: center;
    height: 28px;
    gap: 34px;
    padding-right: 17px;
}
.win-btn {
    width: 12px;
    height: 12px;
}

/* browser toolbar */
.toolbar {
    height: 43px;
    background: #fff;
    border-bottom: 1px solid #ccc;
    display: flex;
    align-items: center;
    padding: 0 0 1px 12px;
    flex-shrink: 0;
}
.nav-btn {
    width: 20px;
    height: 20px;
    margin-right: 12px;
    fill: #202124;
}
.nav-off {
    fill: #9aa0a6;
}
.omnibox {
    width: 1448px;
    height: 34px;
    border-radius: 17px;
    background: #e0e0e0;
    display: flex;
    align-items: center;
    padding: 0 10px 0 12px;
}
.lock {
    width: 12px;
    height: 12px;
    fill: #5f6368;
    margin-right: 10px;
}
.url {
    font-size: 13.5px;
    letter-spacing: .15px;
    color: #5f6368;
}
.url-host {
    color: #202124;
}
.omni-share {
    width: 18px;
    height: 18px;
    margin-left: auto;
    margin-right: -1px;
}
.omni-star {
    width: 17px;
    height: 17px;
    margin-left: 15px;
    fill: #1a73e8;
}
.extensions {
    display: flex;
    margin-left: 6px;
}
.ext {
    width: 32px;
    height: 32px;
    display: flex;
    align-items: center;
    justify-content: center;
    position: relative;
}
.ext svg {
    width: 16px;
    height: 16px;
}
.ext-off svg {
    width: 16px;
    height: 11px;
    margin: -7px 4px 0 0;
}
.off-badge {
    position: absolute;
    right: 2px;
    bottom: 2px;
    width: 18px;
    height: 12px;
    background: #7c6a50;
    border-radius: 2px;
    color: #fff;
    font: bold 10px/12px "Liberation Sans", sans-serif;
    text-align: center;
}
.ext-fba {
    width: 12px;
    height: 12px;
    background: #1fa3dc;
    color: #fff;
    font: bold 5px/10px "Liberation Sans", sans-serif;
    text-align: center;
}
.ext-js {
    width: 16px;
    height: 16px;
    background: #f57c00;
    color: #fff;
    font: bold 11px/16px "Liberation Sans", sans-serif;
    text-align: center;
    border-radius: 1px;
}
.ext-ascout {
    flex-direction: column;
    color: #f7b500;
    font-family: "Liberation Sans", sans-serif;
    font-weight: bold;
}
.ascout-a {
    font-size: 14px;
    line-height: 12px;
}
.ascout-a small {
    font-size: 9px;
    color: #29b6f6;
}
.ascout-s {
    font-size: 5px;
    line-height: 5px;
}
.profile-m {
    width: 22px;
    height: 22px;
    border-radius: 50%;
    background: #689f38;
    color: #e8f1dc;
    font-size: 13px;
    line-height: 22px;
    text-align: center;
}
.ext .chrome-menu {
    width: 20px;
    height: 20px;
    fill: #202124;
}

/* gmail */
.gmail {
    flex: 1;
    display: flex;
    flex-direction: column;
    position: relative;
    min-height: 0;
}
.gm-header {
    height: 64px;
    display: flex;
    align-items: center;
    flex-shrink: 0;
}
.gm-icon {
    width: 24px;
    height: 24px;
    fill: #444746;
}
.brand {
    width: 256px;
    display: flex;
    align-items: center;
    padding-left: 24px;
}
.burger {
    fill: #5f6368;
}
.gmail-logo {
    width: 30px;
    height: 23px;
    margin-left: 17px;
}
.gmail-word {
    font-size: 22px;
    color: #5f6368;
    margin-left: 12px;
    letter-spacing: -.2px;
}
.searchbox {
    width: 720px;
    height: 48px;
    border-radius: 24px;
    background: #e9eff9;
    display: flex;
    align-items: center;
    padding: 0 11px;
}
.search-text {
    margin-left: 9px;
    padding-bottom: 2px;
    font-size: 16px;
    letter-spacing: .2px;
    color: #5f6368;
}
.tune-icon {
    margin-left: auto;
    transform: translateX(-5px);
}
.header-right {
    margin-left: auto;
    display: flex;
    align-items: center;
    gap: 20px;
    padding-right: 18px;
}
.account {
    width: 32px;
    height: 32px;
    border-radius: 50%;
    background: #00859b;
    color: #fff;
    font-size: 16px;
    line-height: 32px;
    text-align: center;
}
.gm-body {
    flex: 1;
    display: flex;
    min-height: 0;
    padding-bottom: 16px;
}

/* sidebar */
.sidebar {
    width: 256px;
    flex-shrink: 0;
    padding-top: 8px;
}
.compose {
    width: 142px;
    height: 56px;
    margin-left: 8px;
    border-radius: 16px;
    background: #c2e7ff;
    display: flex;
    align-items: center;
    padding-left: 16px;
    font-size: 14px;
    font-weight: 500;
    letter-spacing: .2px;
    color: #001d35;
}
.compose-pencil {
    width: 24px;
    height: 24px;
    margin-right: 16px;
    fill: #001d35;
}
.nav-list {
    margin-top: 16px;
    width: 240px;
}
.nav-item {
    height: 32px;
    display: flex;
    align-items: center;
    padding: 0 12px 0 26px;
    font-size: 14px;
    letter-spacing: .1px;
    color: #444746;
    border-radius: 0 16px 16px 0;
}
.nav-item svg {
    width: 20px;
    height: 20px;
    margin-right: 18px;
    fill: #444746;
    flex-shrink: 0;
}
.nav-item.active {
    background: #d3e3fd;
    color: #041e49;
    font-weight: 700;
    letter-spacing: .5px;
}
.nav-item.active svg {
    fill: #041e49;
}
.nav-item.unread {
    font-weight: 700;
    letter-spacing: .55px;
    color: #202124;
}
.nav-item em {
    margin-left: auto;
    font-style: normal;
    font-size: 12px;
    font-weight: 400;
    letter-spacing: 0;
    color: #444746;
}
.labels-head {
    width: 240px;
    height: 32px;
    margin-top: 21px;
    padding: 0 8px 0 26px;
    display: flex;
    align-items: center;
    justify-content: space-between;
    font-size: 16px;
    letter-spacing: .15px;
    color: #202124;
}
.labels-head svg {
    width: 20px;
    height: 20px;
    fill: #444746;
}
.label-list {
    margin-top: 7px;
}

/* main panel */
.panel {
    flex: 1;
    background: #fff;
    border-radius: 16px;
    display: flex;
    flex-direction: column;
    min-width: 0;
}
.actions {
    height: 48px;
    display: flex;
    align-items: center;
    padding-left: 19px;
    flex-shrink: 0;
}
.check-box {
    width: 14px;
    height: 14px;
    border: 2px solid #444746;
    border-radius: 1px;
}
.check-caret {
    width: 0;
    height: 0;
    border: 4px solid transparent;
    border-top: 4px solid #444746;
    border-bottom: 0;
    margin-left: 9px;
}
.act-icon {
    width: 20px;
    height: 20px;
    fill: #444746;
}
.act-refresh {
    margin-left: 26px;
}
.act-more {
    margin-left: 20px;
}
.cat-tabs {
    height: 56px;
    margin: 0 16px 0 0;
    display: flex;
    gap: 18px;
    padding-left: 8px;
    border-bottom: 1px solid #f0f0f0;
    flex-shrink: 0;
}
.cat-tab {
    width: 235px;
    height: 56px;
    display: flex;
    align-items: center;
    padding: 0 0 0 8px;
    font-size: 14px;
    letter-spacing: .25px;
    color: #444746;
}
.cat-tab svg {
    width: 20px;
    height: 20px;
    margin-right: 16px;
    fill: #444746;
}
.cat-tab.selected {
    color: #0b57d0;
    font-weight: 500;
    border-bottom: 3px solid #0b57d0;
    padding-top: 3px;
}
.cat-tab.selected svg {
    fill: #0b57d0;
}
.empty {
    margin: 78px 0 0 521px;
    height: 492px;
    color: #5f6368;
    font-size: 14px;
    letter-spacing: .15px;
    flex-shrink: 0;
}
.empty h2 {
    margin: 0;
    font-size: 16px;
    line-height: 24px;
    font-weight: 400;
    letter-spacing: .2px;
}
.empty p {
    margin: 13px 0 0;
    line-height: 20px;
}
.empty p + p {
    margin-top: 15px;
}
.empty a {
    color: #0b57d0;
}
.gm-footer {
    display: flex;
    padding: 0 34px 0 16px;
    font-size: 12px;
    letter-spacing: .06px;
    color: #5f6368;
    line-height: 20px;
}
.storage {
    width: 220px;
    padding-top: 1px;
}
.storage-bar {
    height: 6px;
    border-radius: 3px;
    background: #dadce0;
    margin-top: 1px;
}
.storage-text {
    margin-top: 7px;
    display: flex;
    align-items: center;
    gap: 10px;
}
.storage-text svg {
    width: 18px;
    height: 18px;
    fill: #5f6368;
}
.policies {
    margin-left: 468px;
    margin-top: -4px;
}
.activity {
    margin-left: auto;
    text-align: right;
    margin-top: -4px;
}

/* right side panel */
.sidepanel {
    width: 56px;
    flex-shrink: 0;
    display: flex;
    flex-direction: column;
    align-items: center;
    padding-top: 18px;
}
.side-icon {
    width: 20px;
    height: 20px;
    margin-bottom: 36px;
    flex-shrink: 0;
}
.cal-num {
    font: bold 7px "Liberation Sans", sans-serif;
    fill: #4285f4;
    text-anchor: middle;
}
.side-divider {
    width: 20px;
    height: 1px;
    background: #dadce0;
    margin-top: -2px;
}
.side-add {
    width: 24px;
    height: 24px;
    margin-top: 32px;
    fill: #202124;
}
.side-expand {
    width: 20px;
    height: 20px;
    margin-top: auto;
    margin-bottom: 2px;
    fill: #202124;
}

/* notification toast */
.notify {
    position: absolute;
    left: 24px;
    top: 887px;
    width: 463px;
    height: 52px;
    background: #202124;
    border-radius: 4px;
    box-shadow: 0 2px 6px rgba(0, 0, 0, .3);
    display: flex;
    align-items: center;
    padding-left: 24px;
    font-size: 14px;
    font-weight: 500;
    color: #f1f3f4;
}
.notify a {
    color: #8ab4f8;
    margin-left: 24px;
    letter-spacing: .4px;
}
.notify-text {
    width: 245px;
    letter-spacing: .08px;
    white-space: nowrap;
}
.notify svg {
    width: 20px;
    height: 20px;
    margin-left: 24px;
    fill: #dadce0;
}

/* windows taskbar */
.taskbar {
    height: 40px;
    background: #1c1c1e;
    display: flex;
    align-items: center;
    flex-shrink: 0;
    color: #fff;
    font-size: 13px;
}
.start {
    width: 48px;
    display: flex;
    justify-content: center;
}
.start svg {
    width: 16px;
    height: 16px;
}
.task-search {
    width: 289px;
    height: 40px;
    background: #f3f3f3;
    border: 1px solid #bbb;
    display: flex;
    align-items: center;
    padding-left: 11px;
    color: #222;
    font-size: 14.7px;
}
.task-search > svg:first-child {
    width: 18px;
    height: 18px;
    margin-right: 10px;
}
.mug {
    width: 80px;
    height: 38px;
    margin-left: auto;
}
.task-icons {
    display: flex;
}
.task-item {
    width: 49.2px;
    height: 40px;
    display: flex;
    align-items: center;
    justify-content: center;
    position: relative;
}
.task-item > svg {
    width: 24px;
    height: 24px;
}
.task-item.running::after {
    content: "";
    position: absolute;
    bottom: 0;
    left: 5px;
    right: 5px;
    height: 2px;
    background: #76b9ed;
}
.task-item.current {
    background: #4a4a4a;
}
.task-item.current::after {
    left: 0;
    right: 0;
}
.ps-icon {
    width: 22px;
    height: 24px;
    border-radius: 3px;
    background: #001e36;
    color: #31a8ff;
    font: bold 13px/24px "Liberation Sans", sans-serif;
    text-align: center;
}
.task-badge,
.profile-badge {
    position: absolute;
    right: 10px;
    bottom: 4px;
    width: 16px;
    height: 16px;
    border-radius: 50%;
    background: #e53935;
    color: #fff;
    font-size: 10px;
    line-height: 16px;
    text-align: center;
}
.profile-badge {
    background: #689f38;
}
.badge-blue {
    background: #5c6bc0;
}
.address-label {
    margin-left: 193px;
    width: 41px;
    font-size: 12px;
    color: #e8e8e8;
}
.address-box {
    width: 230px;
    height: 26px;
    margin-left: 6px;
    background: #fff;
    display: flex;
    align-items: center;
    justify-content: flex-end;
}
.addr-caret {
    width: 12px;
    height: 12px;
    margin-right: 12px;
}
.addr-go {
    width: 14px;
    height: 14px;
    margin: 0 7px 0 4px;
    fill: #555;
}
.sun {
    width: 20px;
    height: 20px;
    border-radius: 50%;
    margin-left: 85px;
    background: linear-gradient(135deg, #f7b420, #ee6c12);
}
.weather {
    margin-left: 10px;
    font-size: 14px;
    color: #e8e8e8;
}
.weather-word {
    margin-left: 8px;
}
.tray {
    width: 16px;
    height: 16px;
    margin-left: 8px;
    flex-shrink: 0;
}
.tray-first {
    margin-left: 22px;
}
.clock {
    width: 64px;
    margin-left: 5px;
    text-align: center;
    font-size: 12px;
    line-height: 18px;
    color: #e8e8e8;
}
.action-center {
    width: 24px;
    height: 28px;
    margin-left: 13px;
    position: relative;
}
.action-center svg {
    width: 16px;
    height: 14px;
    position: absolute;
    left: 0;
    top: 2px;
}
.ac-count {
    position: absolute;
    left: 5px;
    top: 8px;
    width: 21px;
    height: 21px;
    border-radius: 50%;
    border: 1px solid #777;
    background: #1c1c1e;
    font-size: 11px;
    font-weight: 700;
    line-height: 19px;
    text-align: center;
}
```
